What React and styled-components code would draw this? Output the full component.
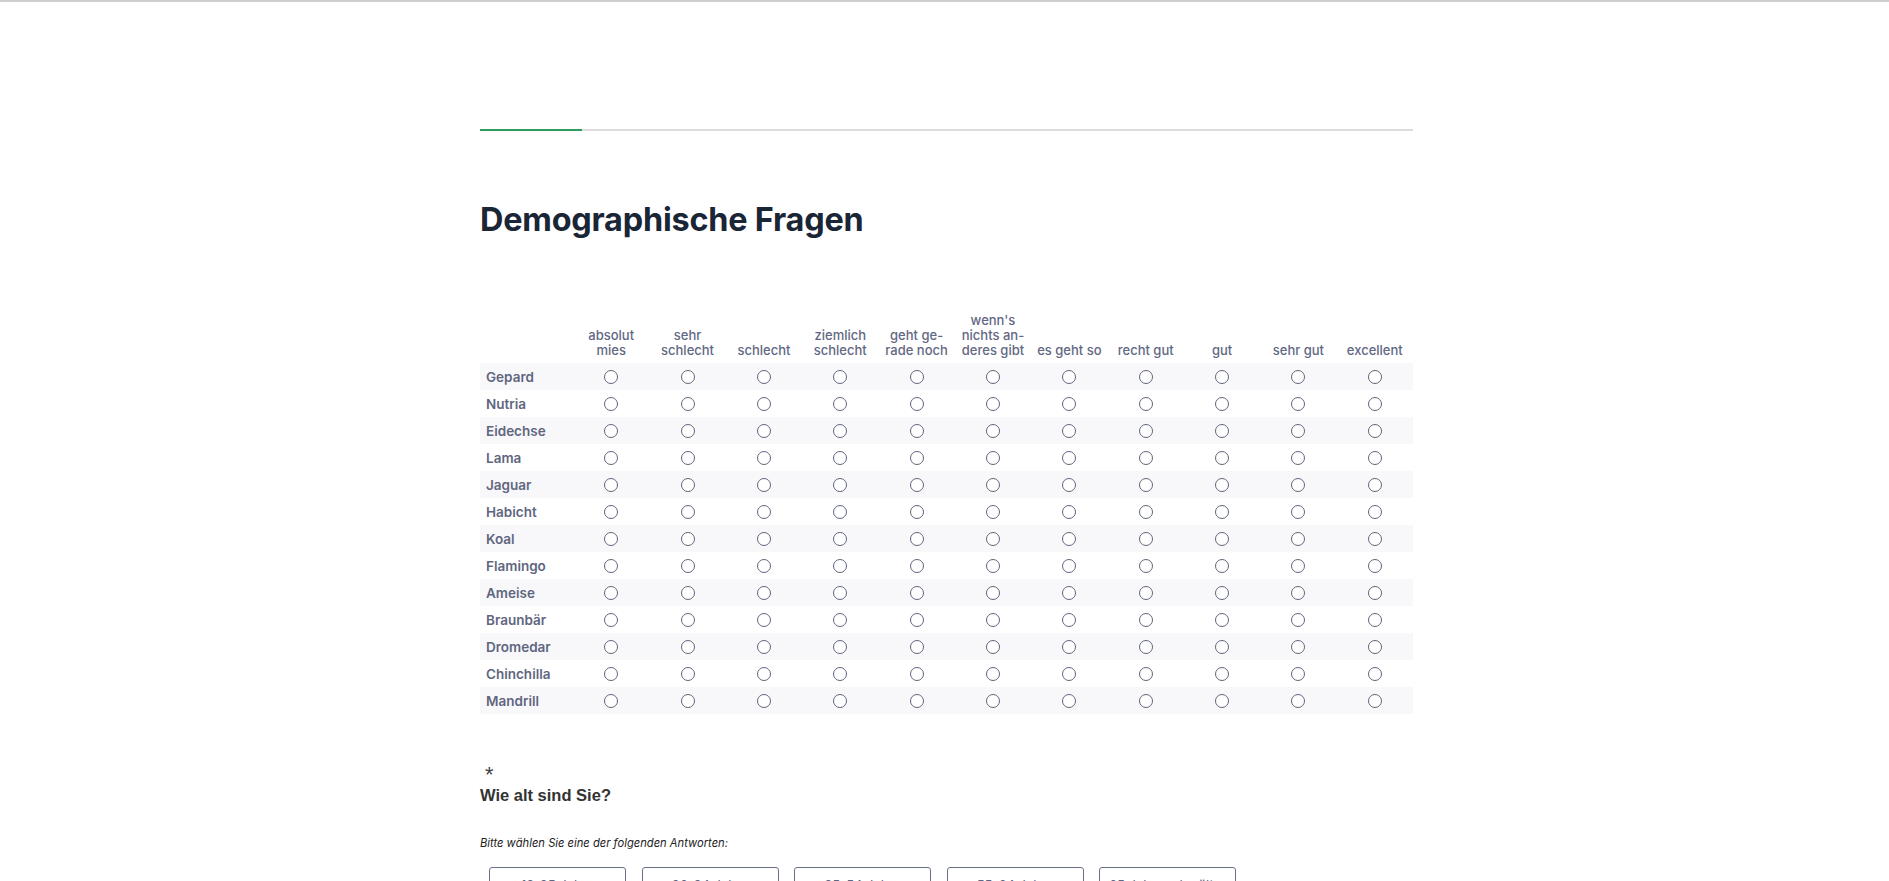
import React from 'react';
import styled, { createGlobalStyle } from 'styled-components';

const GlobalStyle = createGlobalStyle`
  html, body {
    margin: 0;
    padding: 0;
    background: #ffffff;
  }
  body {
    font-family: Inter, "Noto Sans", sans-serif;
  }
`;

const Page = styled.div`
  border-top: 2px solid #cfcfcf;
  min-height: 879px;
`;

const Container = styled.div`
  width: 933px;
  margin: 0 auto;
  padding-left: 4px;
`;

const ProgressTrack = styled.div`
  margin-top: 127px;
  height: 2px;
  background: #dcdcdc;
`;

const ProgressFill = styled.div`
  height: 100%;
  background: #2d9d5f;
`;

const Title = styled.h1`
  margin: 69px 0 0;
  font-family: Inter, sans-serif;
  font-size: 32.4px;
  line-height: 40px;
  font-weight: 700;
  color: #1a2536;
  letter-spacing: -0.2px;
`;

const Matrix = styled.table`
  margin-top: 73px;
  width: 100%;
  border-collapse: collapse;
  table-layout: fixed;
`;

const HeadCell = styled.th`
  width: ${(p) => (p.$label ? '93px' : 'auto')};
  padding: 0 0 5px;
  vertical-align: bottom;
  text-align: center;
  font-size: 13px;
  line-height: 15px;
  font-weight: 500;
  color: #626883;
  white-space: nowrap;
`;

const Row = styled.tr`
  height: 27px;
  background: ${(p) => (p.$striped ? '#f8f8fa' : '#ffffff')};
`;

const LabelCell = styled.td`
  padding: 0 0 0 6px;
  font-size: 13.5px;
  font-weight: 600;
  color: #5f6680;
  vertical-align: middle;
`;

const RadioCell = styled.td`
  padding: 0;
  text-align: center;
  vertical-align: middle;
  line-height: 0;
`;

const Radio = styled.input.attrs({ type: 'radio' })`
  appearance: none;
  margin: 0;
  width: 14px;
  height: 14px;
  border: 1.7px solid #5f657c;
  border-radius: 50%;
  background: #fff;
  box-sizing: border-box;
`;

const Question = styled.div`
  margin-top: 51px;
  font-family: "Liberation Sans", Arial, sans-serif;
`;

const Asterisk = styled.div`
  padding-left: 5px;
  font-size: 22px;
  line-height: 20px;
  color: #444;
`;

const QuestionText = styled.div`
  font-size: 16.5px;
  line-height: 21px;
  font-weight: 700;
  color: #333;
`;

const Hint = styled.div`
  margin-top: 30px;
  font-family: Inter, sans-serif;
  font-size: 11.2px;
  font-style: italic;
  color: #222;
`;

const Options = styled.div`
  display: flex;
  gap: 15.5px;
  margin-top: 17px;
  padding-left: 9px;
`;

const OptionButton = styled.button`
  width: 137px;
  padding: 7px 2px;
  border: 1.5px solid #6b7089;
  border-radius: 3px;
  background: #fff;
  font-family: Inter, sans-serif;
  font-size: 13px;
  line-height: 20px;
  color: #5f6680;
  text-align: center;
  white-space: nowrap;
`;

const columns = [
  ['absolut', 'mies'],
  ['sehr', 'schlecht'],
  ['schlecht'],
  ['ziemlich', 'schlecht'],
  ['geht ge-', 'rade noch'],
  ["wenn's", 'nichts an-', 'deres gibt'],
  ['es geht so'],
  ['recht gut'],
  ['gut'],
  ['sehr gut'],
  ['excellent'],
];

const animals = [
  'Gepard', 'Nutria', 'Eidechse', 'Lama', 'Jaguar', 'Habicht', 'Koal',
  'Flamingo', 'Ameise', 'Braunbär', 'Dromedar', 'Chinchilla', 'Mandrill',
];

const ages = ['18-25 Jahre', '26-34 Jahre', '35-54 Jahre', '55-64 Jahre', '65 Jahre oder älter'];

export default function App() {
  return (
    <Page>
      <GlobalStyle />
      <Container>
        <ProgressTrack>
          <ProgressFill style={{ width: `${(102 / 933) * 100}%` }} />
        </ProgressTrack>
        <Title>Demographische Fragen</Title>
        <Matrix>
          <thead>
            <tr>
              <HeadCell $label />
              {columns.map((lines, i) => (
                <HeadCell key={i}>
                  {lines.map((l, j) => (
                    <React.Fragment key={j}>
                      {j > 0 && <br />}
                      {l}
                    </React.Fragment>
                  ))}
                </HeadCell>
              ))}
            </tr>
          </thead>
          <tbody>
            {animals.map((name, r) => (
              <Row key={name} $striped={r % 2 === 0}>
                <LabelCell>{name}</LabelCell>
                {columns.map((_, c) => (
                  <RadioCell key={c}>
                    <Radio name={name} aria-label={`${name} ${c + 1}`} />
                  </RadioCell>
                ))}
              </Row>
            ))}
          </tbody>
        </Matrix>
        <Question>
          <Asterisk>*</Asterisk>
          <QuestionText>Wie alt sind Sie?</QuestionText>
        </Question>
        <Hint>Bitte wählen Sie eine der folgenden Antworten:</Hint>
        <Options>
          {ages.map((a) => (
            <OptionButton key={a}>{a}</OptionButton>
          ))}
        </Options>
      </Container>
    </Page>
  );
}
